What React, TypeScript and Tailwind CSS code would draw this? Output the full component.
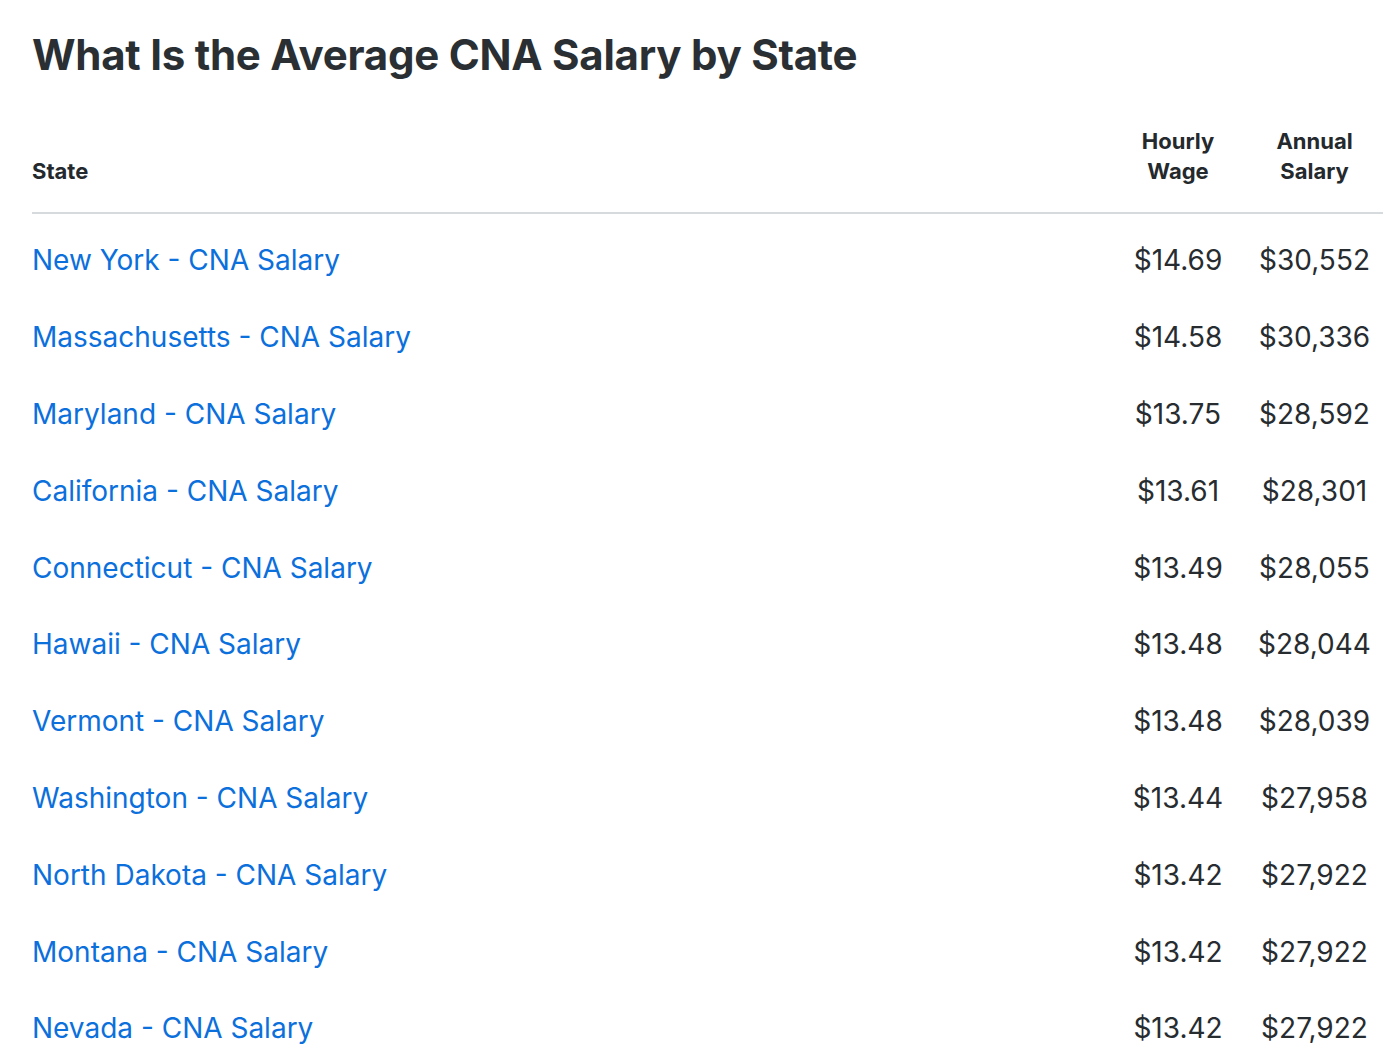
const rows = [
  { state: 'New York', hourly: '$14.69', annual: '$30,552' },
  { state: 'Massachusetts', hourly: '$14.58', annual: '$30,336' },
  { state: 'Maryland', hourly: '$13.75', annual: '$28,592' },
  { state: 'California', hourly: '$13.61', annual: '$28,301' },
  { state: 'Connecticut', hourly: '$13.49', annual: '$28,055' },
  { state: 'Hawaii', hourly: '$13.48', annual: '$28,044' },
  { state: 'Vermont', hourly: '$13.48', annual: '$28,039' },
  { state: 'Washington', hourly: '$13.44', annual: '$27,958' },
  { state: 'North Dakota', hourly: '$13.42', annual: '$27,922' },
  { state: 'Montana', hourly: '$13.42', annual: '$27,922' },
  { state: 'Nevada', hourly: '$13.42', annual: '$27,922' },
];

export default function App() {
  return (
    <div className="min-h-screen bg-white font-['Inter',sans-serif] text-[#272c30] pl-[32px] pr-[17px] pt-[28px]">
      <h1 className="text-[42px] leading-[54px] font-bold tracking-[-0.25px] text-[#2a2f33]">
        What Is the Average CNA Salary by State
      </h1>

      <div className="mt-[44px]">
        <div className="grid grid-cols-[1fr_136px_137px] items-end border-b-2 border-[#d6dadc] pb-[26px] text-[22px] leading-[30px] font-bold text-[#24292d]">
          <div>State</div>
          <div className="text-center">Hourly<br />Wage</div>
          <div className="text-center">Annual<br />Salary</div>
        </div>

        <div className="pt-[8px]">
          {rows.map((r) => (
            <div
              key={r.state}
              className="grid grid-cols-[1fr_136px_137px] items-center h-[76.8px] text-[28px]"
            >
              <a href="#" className="text-[#0b6fdc]">
                {r.state} - CNA Salary
              </a>
              <div className="text-center">{r.hourly}</div>
              <div className="text-center">{r.annual}</div>
            </div>
          ))}
        </div>
      </div>
    </div>
  );
}
